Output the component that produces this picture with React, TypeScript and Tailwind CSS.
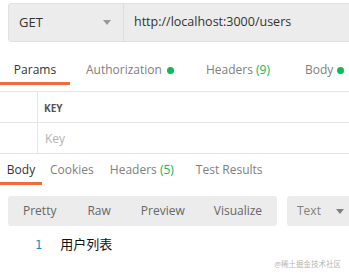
export default function App() {
  const font = { fontFamily: '"Open Sans", "Noto Sans CJK SC", sans-serif' };

  return (
    <main className="w-[349px] h-[277px] overflow-hidden bg-white relative text-[12px]" style={font}>
      {/* адресная строка */}
      <div className="flex ml-[8px] mt-[3px] h-[39px] w-[360px] bg-[#ececec] border border-[#e0e0e0] rounded-[3px]">
        <div className="w-[115px] flex items-center justify-between pl-[10px] pr-[12px] border-r border-[#dcdcdc] text-[#333] text-[13px]">
          <span>GET</span>
          <svg width="8" height="5" viewBox="0 0 8 5">
            <path d="M0 0 L8 0 L4 5 Z" fill="#9a9a9a" />
          </svg>
        </div>
        <div className="flex items-center pl-[10px] text-[#333] text-[12.5px]">http://localhost:3000/users</div>
      </div>

      {/* вкладки запроса */}
      <div className="flex h-[43px] items-end">
        <div className="w-[70px] h-[43px] flex flex-col justify-end">
          <div className="text-center text-[#333] leading-[20px]">Params</div>
          <div className="h-[3px] bg-[#f26b3a] mt-[2px]" />
        </div>
        <div className="flex items-center ml-[16px] text-[#808080] leading-[20px] mb-[5px]">
          Authorization
          <span className="w-[7px] h-[7px] rounded-full bg-[#0cbb52] ml-[5px]" />
        </div>
        <div className="ml-[32px] text-[#808080] leading-[20px] mb-[5px]">
          Headers <span className="text-[#0cbb52]">(9)</span>
        </div>
        <div className="flex items-center ml-[35px] text-[#808080] leading-[20px] mb-[5px]">
          Body
          <span className="w-[7px] h-[7px] rounded-full bg-[#0cbb52] ml-[4px]" />
        </div>
      </div>

      {/* таблица параметров */}
      <div className="mt-[6px] border-t border-[#e6e6e6]">
        <div className="flex h-[31px] border-b border-[#e6e6e6]">
          <div className="w-[38px] border-r border-[#e6e6e6]" />
          <div className="flex items-center pl-[6px] pt-[2px] text-[10px] font-bold text-[#555]">KEY</div>
        </div>
        <div className="flex h-[31px] border-b border-[#e6e6e6]">
          <div className="w-[38px] border-r border-[#e6e6e6]" />
          <div className="flex items-center pl-[7px] pt-[1px] text-[#b3b3b3]">Key</div>
        </div>
      </div>

      {/* вкладки ответа */}
      <div className="flex items-end h-[31px]">
        <div className="w-[42px] flex flex-col">
          <div className="text-center text-[#333] leading-[20px]">Body</div>
          <div className="h-[3px] bg-[#f26b3a] mt-[2px]" />
        </div>
        <div className="ml-[8px] text-[#808080] leading-[20px] mb-[5px]">Cookies</div>
        <div className="ml-[16px] text-[#808080] leading-[20px] mb-[5px]">
          Headers <span className="text-[#0cbb52]">(5)</span>
        </div>
        <div className="ml-[22px] text-[#808080] leading-[20px] mb-[5px]">Test Results</div>
      </div>

      {/* режимы просмотра */}
      <div className="flex mt-[11px] ml-[8px] h-[30px]">
        <div className="w-[269px] shrink-0 flex items-center bg-[#ececec] rounded-[3px] text-[#666]">
          <span className="ml-[15px]">Pretty</span>
          <span className="ml-[31px]">Raw</span>
          <span className="ml-[30px]">Preview</span>
          <span className="ml-[29px]">Visualize</span>
        </div>
        <div className="ml-[10px] w-[80px] shrink-0 flex items-center bg-[#ececec] rounded-[3px] text-[#808080]">
          <span className="ml-[10px]">Text</span>
          <svg className="ml-[15px]" width="8" height="5" viewBox="0 0 8 5">
            <path d="M0 0 L8 0 L4 5 Z" fill="#808080" />
          </svg>
        </div>
      </div>

      {/* тело ответа */}
      <div className="flex items-center mt-[10px] h-[18px]">
        <span className="ml-[35px] text-[#1e88c8] text-[12px]" style={{ fontFamily: '"DejaVu Sans Mono", monospace' }}>1</span>
        <span className="ml-[18px] text-[#111] text-[13px]">用户列表</span>
      </div>

      <div className="absolute right-[8px] bottom-[7px] text-[7.5px] text-[#b5b5b5]">@稀土掘金技术社区</div>
    </main>
  );
}
